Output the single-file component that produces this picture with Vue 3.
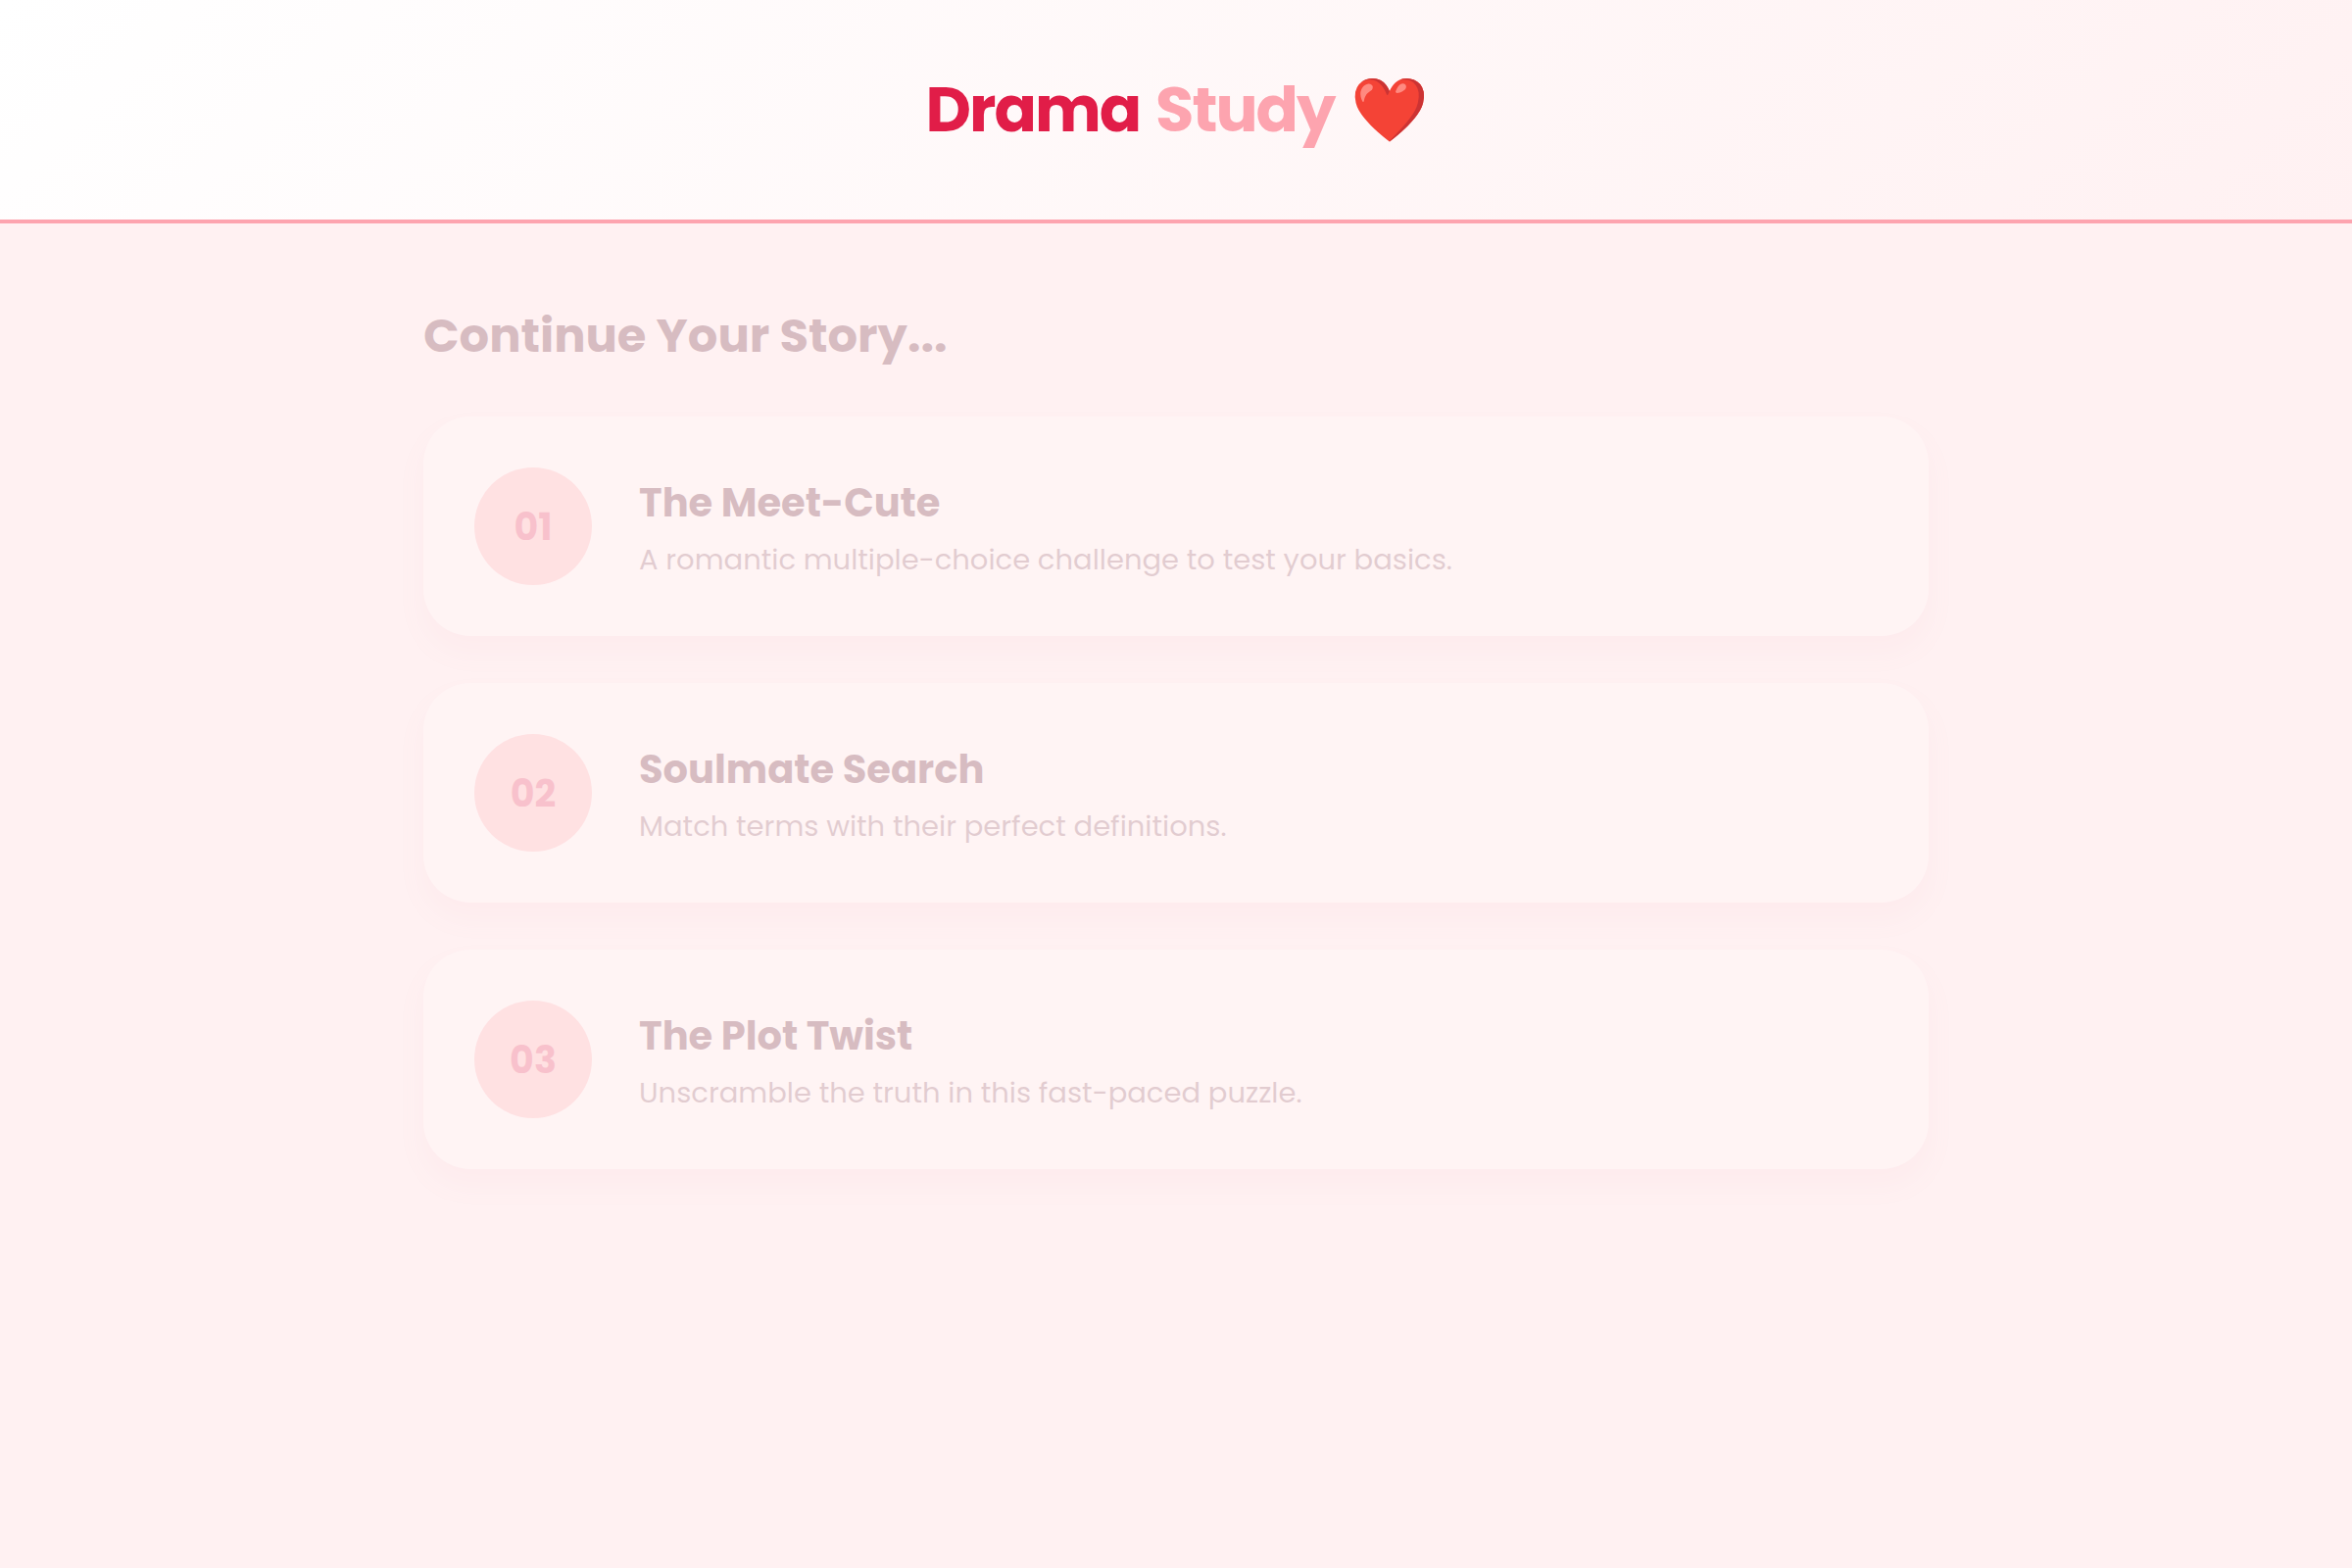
<template>
  <div class="page">
    <header class="header">
      <h1 class="logo">
        <span>Drama</span>
        <span class="logo-accent">Study</span>
        <span>❤️</span>
      </h1>
    </header>

    <main class="content">
      <h2 class="section-title">Continue Your Story...</h2>
      <nav class="mode-list" aria-label="Study modes">
        <a v-for="mode in modes" :key="mode.number" href="#" class="mode-card">
          <span class="mode-number">{{ mode.number }}</span>
          <div class="mode-info">
            <h3 class="mode-title">{{ mode.title }}</h3>
            <p class="mode-description">{{ mode.description }}</p>
          </div>
        </a>
      </nav>
    </main>
  </div>
</template>

<script setup>
const modes = [
  {
    number: "01",
    title: "The Meet-Cute",
    description: "A romantic multiple-choice challenge to test your basics.",
  },
  {
    number: "02",
    title: "Soulmate Search",
    description: "Match terms with their perfect definitions.",
  },
  {
    number: "03",
    title: "The Plot Twist",
    description: "Unscramble the truth in this fast-paced puzzle.",
  },
];
</script>

<style>
body {
  margin: 0;
  background: #fff1f2;
}
</style>

<style scoped>
.page {
  min-height: 100vh;
  font-family: Poppins, Inter, "Open Sans", sans-serif;
  color: #4c0519;
}

.header {
  padding: 64px 48px;
  background: linear-gradient(135deg, #ffffff, #fff1f2);
  border-bottom: 4px solid #fda4af;
}

.logo {
  display: flex;
  justify-content: center;
  gap: 16px;
  margin: 0;
  font-size: 64px;
  font-weight: 700;
  line-height: 96px;
  letter-spacing: -2px;
  color: #e11d48;
}

.logo-accent {
  color: #fda4af;
}

.content {
  box-sizing: border-box;
  max-width: 1600px;
  margin: 0 auto;
  padding: 80px 32px;
  opacity: 0.22;
}

.section-title {
  margin: 0 0 47px;
  font-size: 48px;
  font-weight: 700;
  line-height: 70px;
}

.mode-list {
  display: flex;
  flex-direction: column;
  gap: 48px;
}

.mode-card {
  display: flex;
  align-items: center;
  gap: 48px;
  padding: 52px;
  border-radius: 48px;
  background: #ffffff;
  box-shadow: 0 16px 24px rgba(225, 29, 72, 0.1);
  color: inherit;
  text-decoration: none;
}

.mode-number {
  display: flex;
  flex-shrink: 0;
  align-items: center;
  justify-content: center;
  width: 120px;
  height: 120px;
  border-radius: 50%;
  background: #ffaaac;
  font-size: 38px;
  font-weight: 700;
  color: #e11d48;
}

.mode-title {
  margin: 0;
  font-size: 40px;
  font-weight: 700;
  line-height: 60px;
}

.mode-description {
  margin: 8px 0 0;
  font-size: 29px;
  line-height: 40px;
  opacity: 0.7;
}
</style>
